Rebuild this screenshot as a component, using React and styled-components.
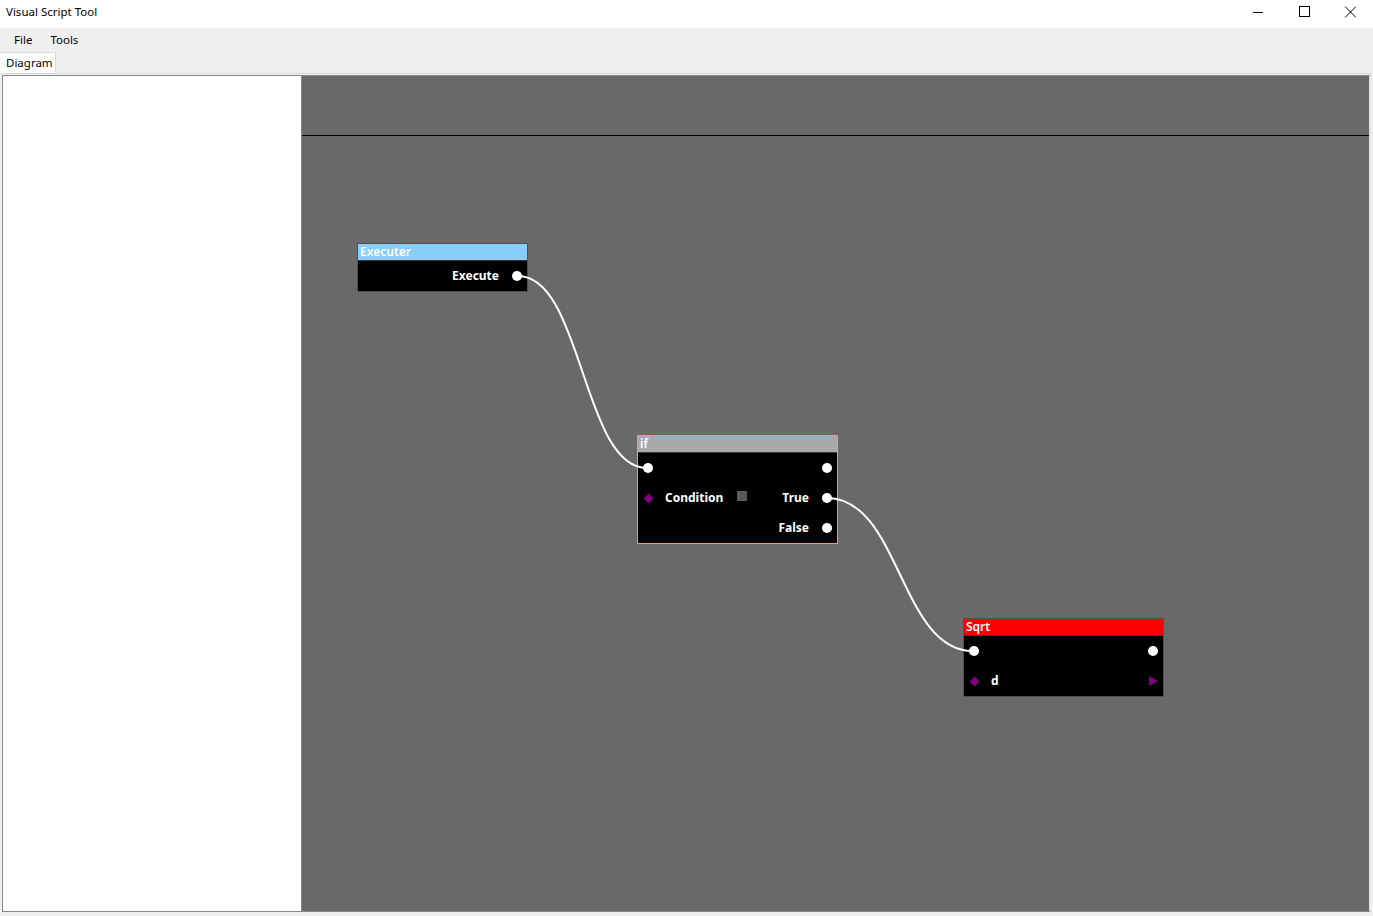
import React from 'react';
import styled, { createGlobalStyle } from 'styled-components';

const GlobalStyle = createGlobalStyle`
  html, body {
    margin: 0;
    padding: 0;
    background: #f0f0f0;
    font-family: "Noto Sans", "Open Sans", sans-serif;
  }
`;

const Window = styled.div`
  width: 1373px;
  height: 916px;
  display: flex;
  flex-direction: column;
  background: #f0f0f0;
  overflow: hidden;
`;

const TitleBar = styled.div`
  height: 28px;
  display: flex;
  align-items: flex-start;
  background: #fff;
`;

const Title = styled.div`
  flex: 1;
  padding: 4px 0 0 6px;
  font-size: 11.5px;
  line-height: 16px;
  color: #000;
`;

const WinButton = styled.div`
  width: 46px;
  height: 24px;
  display: flex;
  align-items: center;
  justify-content: center;
`;

const MenuBar = styled.div`
  height: 23px;
  display: flex;
  align-items: center;
  background: #f0f0f0;
  padding-left: 5px;
`;

const MenuItem = styled.div`
  font-size: 11.5px;
  padding: 0 9px;
  color: #000;
`;

const TabStrip = styled.div`
  height: 22px;
  display: flex;
  align-items: flex-end;
  border-bottom: 1px solid #d9d9d9;
`;

const Tab = styled.div`
  height: 21px;
  width: 56px;
  box-sizing: border-box;
  padding-left: 6px;
  font-size: 11.5px;
  line-height: 20px;
  background: #fff;
  border: 1px solid #d9d9d9;
  border-left: none;
  border-bottom: none;
`;

const Content = styled.div`
  flex: 1;
  display: flex;
  padding: 1px 2px 4px 2px;
  background: #f0f0f0;
`;

const SidePanel = styled.div`
  width: 300px;
  box-sizing: border-box;
  background: #fff;
  border: 1px solid #828790;
`;

const Canvas = styled.div`
  flex: 1;
  display: flex;
  flex-direction: column;
  background: #696969;
  border-top: 1px solid #828790;
  border-bottom: 1px solid #828790;
  border-right: 2px solid #e3e3e3;
`;

const CanvasTop = styled.div`
  height: 59px;
  border-bottom: 1px solid #000;
`;

const Board = styled.div`
  position: relative;
  flex: 1;
`;

const Wires = styled.svg`
  position: absolute;
  left: 0;
  top: 0;
  width: 100%;
  height: 100%;
  pointer-events: none;
`;

const Node = styled.div`
  position: absolute;
  box-sizing: border-box;
  display: flex;
  flex-direction: column;
  background: #000;
  border: 1px solid ${p => (p.$selected ? '#f0a830' : '#505050')};
`;

const NodeHeader = styled.div`
  height: 16px;
  flex-shrink: 0;
  background: ${p => p.$color};
  color: #fff;
  font-size: 12px;
  font-weight: 600;
  line-height: 15px;
  padding-left: 2px;
  border-bottom: 1px solid #3a3a3a;
`;

const Row = styled.div`
  height: 30px;
  display: flex;
  align-items: center;
  color: #fff;
  font-size: 12px;
  font-weight: 700;
`;

const Slot = styled.div`
  width: 20px;
  height: 30px;
  flex-shrink: 0;
  display: flex;
  align-items: center;
  justify-content: center;
`;

const Label = styled.div`
  padding: ${p => (p.$right ? '0 8px 0 0' : '0 0 0 7px')};
  margin-left: ${p => (p.$right ? 'auto' : '0')};
  margin-top: -2px;
`;

const Port = styled.div`
  width: 10px;
  height: 10px;
  border-radius: 50%;
  background: #fff;
`;

const Diamond = styled.div`
  width: 7px;
  height: 7px;
  background: #800080;
  transform: rotate(45deg);
`;

const Arrow = styled.div`
  width: 0;
  height: 0;
  border-top: 5px solid transparent;
  border-bottom: 5px solid transparent;
  border-left: 9px solid #800080;
`;

const Check = styled.div`
  width: 10px;
  height: 10px;
  background: #5a5a5a;
  margin-left: 14px;
  margin-top: -5px;
`;

const wire = (x1, y1, x2, y2) => {
  const m = (x1 + x2) / 2;
  return `M${x1} ${y1} C${m} ${y1} ${m} ${y2} ${x2} ${y2}`;
};

const App = () => (
  <Window>
    <GlobalStyle />
    <TitleBar>
      <Title>Visual Script Tool</Title>
      <WinButton>
        <svg width="12" height="12" viewBox="0 0 12 12">
          <path d="M1 6.5h10" stroke="#000" strokeWidth="1" />
        </svg>
      </WinButton>
      <WinButton>
        <svg width="12" height="12" viewBox="0 0 12 12">
          <rect x="1.5" y="0.5" width="10" height="10" fill="none" stroke="#000" />
        </svg>
      </WinButton>
      <WinButton>
        <svg width="12" height="12" viewBox="0 0 12 12">
          <path d="M1 0.5l11 11M12 0.5l-11 11" stroke="#000" strokeWidth="1" />
        </svg>
      </WinButton>
    </TitleBar>
    <MenuBar>
      <MenuItem>File</MenuItem>
      <MenuItem>Tools</MenuItem>
    </MenuBar>
    <TabStrip>
      <Tab>Diagram</Tab>
    </TabStrip>
    <Content>
      <SidePanel />
      <Canvas>
        <CanvasTop />
        <Board>
          <Node style={{ left: 55, top: 107, width: 171, height: 49 }}>
            <NodeHeader $color="#87cefa">Executer</NodeHeader>
            <Row>
              <Label $right>Execute</Label>
              <Slot><Port /></Slot>
            </Row>
          </Node>

          <Node $selected style={{ left: 335, top: 299, width: 201, height: 109 }}>
            <NodeHeader $color="#a9a9a9">if</NodeHeader>
            <Row>
              <Slot><Port /></Slot>
              <Label $right />
              <Slot><Port /></Slot>
            </Row>
            <Row>
              <Slot><Diamond /></Slot>
              <Label>Condition</Label>
              <Check />
              <Label $right>True</Label>
              <Slot><Port /></Slot>
            </Row>
            <Row>
              <Label $right>False</Label>
              <Slot><Port /></Slot>
            </Row>
          </Node>

          <Node style={{ left: 661, top: 482, width: 201, height: 79 }}>
            <NodeHeader $color="#ff0000">Sqrt</NodeHeader>
            <Row>
              <Slot><Port /></Slot>
              <Label $right />
              <Slot><Port /></Slot>
            </Row>
            <Row>
              <Slot><Diamond /></Slot>
              <Label>d</Label>
              <Label $right />
              <Slot><Arrow /></Slot>
            </Row>
          </Node>

          <Wires>
            <path d={wire(216, 140, 345, 332)} fill="none" stroke="#fff" strokeWidth="2" />
            <path d={wire(525, 362, 671, 515)} fill="none" stroke="#fff" strokeWidth="2" />
          </Wires>
        </Board>
      </Canvas>
    </Content>
  </Window>
);

export default App;
